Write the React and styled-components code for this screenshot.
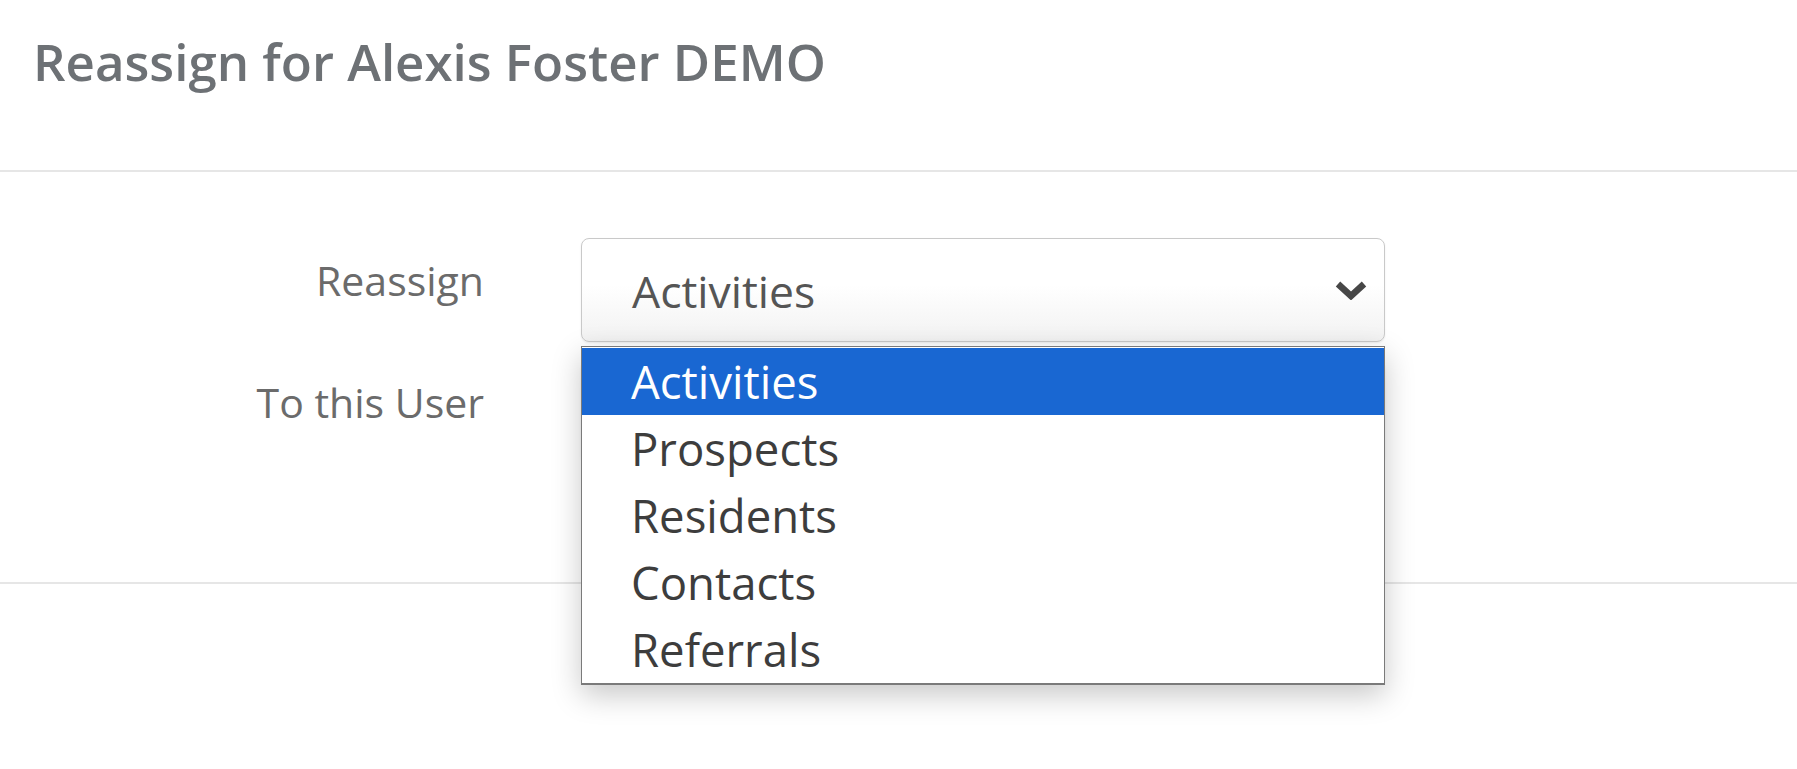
import styled, { createGlobalStyle } from 'styled-components';
import { useState } from 'react';

const GlobalStyle = createGlobalStyle`
  html, body {
    margin: 0;
    padding: 0;
    background: #fff;
    font-family: "Open Sans", "Noto Sans", sans-serif;
  }
`;

const options = ["Activities", "Prospects", "Residents", "Contacts", "Referrals"];

export default function App() {
    const [selected, setSelected] = useState("Activities");

    return (
        <>
            <GlobalStyle />
            <Modal>
                <Header>
                    <Title>Reassign for Alexis Foster DEMO</Title>
                </Header>
                <Body>
                    <Form>
                        <Label>Reassign</Label>
                        <Field>
                            <SelectBox>
                                <SelectText>{selected}</SelectText>
                                <Chevron viewBox="0 0 34 20">
                                    <polyline points="4,4 17,16 30,4" />
                                </Chevron>
                            </SelectBox>
                            <OptionList>
                                {options.map((o) => (
                                    <Option
                                        key={o}
                                        $active={o === selected}
                                        onClick={() => setSelected(o)}
                                    >
                                        {o}
                                    </Option>
                                ))}
                            </OptionList>
                        </Field>

                        <Label>To this User</Label>
                        <Field>
                            <SelectBox />
                        </Field>
                    </Form>
                </Body>
                <Footer />
            </Modal>
        </>
    );
}

const Modal = styled.div`
    width: 100%;
    min-height: 769px;
    background: #fff;
`;

const Header = styled.div`
    padding: 31px 33px 78px;
    border-bottom: 2px solid #e6e6e6;
`;

const Title = styled.h4`
    margin: 0;
    font-family: "Open Sans", sans-serif;
    font-size: 51px;
    font-weight: 600;
    line-height: 1.2;
    color: #6d7175;
`;

const Body = styled.div`
    padding: 66px 0 118px;
    border-bottom: 2px solid #e6e6e6;
`;

const Form = styled.div`
    display: grid;
    grid-template-columns: 484px 804px;
    column-gap: 97px;
    row-gap: 18px;
`;

const Label = styled.label`
    padding-top: 18px;
    text-align: right;
    font-size: 41px;
    line-height: 1.2;
    color: #6b6b6b;
`;

const Field = styled.div`
    position: relative;
`;

const SelectBox = styled.div`
    box-sizing: border-box;
    height: 104px;
    display: flex;
    align-items: center;
    justify-content: space-between;
    padding: 0 16px 0 50px;
    border: 1px solid #c9c9c9;
    border-radius: 8px;
    background: linear-gradient(#ffffff 45%, #f2f2f2);
    box-shadow: 0 1px 2px rgba(0, 0, 0, 0.08);
`;

const SelectText = styled.span`
    font-size: 44.5px;
    color: #555;
`;

const Chevron = styled.svg`
    width: 34px;
    height: 20px;
    fill: none;
    stroke: #474747;
    stroke-width: 6.5;
`;

const OptionList = styled.ul`
    position: absolute;
    top: calc(100% + 4px);
    left: 0;
    right: 0;
    z-index: 10;
    margin: 0;
    padding: 1px 0 0;
    list-style: none;
    background: #fff;
    border: 1px solid #7a7a7a;
    border-bottom-width: 2px;
    box-shadow: 0 10px 28px rgba(0, 0, 0, 0.22);
`;

const Option = styled.li`
    height: 67px;
    padding-left: 49px;
    font-size: 45.5px;
    line-height: 67px;
    color: ${(props) => (props.$active ? '#fff' : '#3d3d3d')};
    background: ${(props) => (props.$active ? '#1967d2' : 'transparent')};
    cursor: default;
`;

const Footer = styled.div`
    height: 185px;
`;
